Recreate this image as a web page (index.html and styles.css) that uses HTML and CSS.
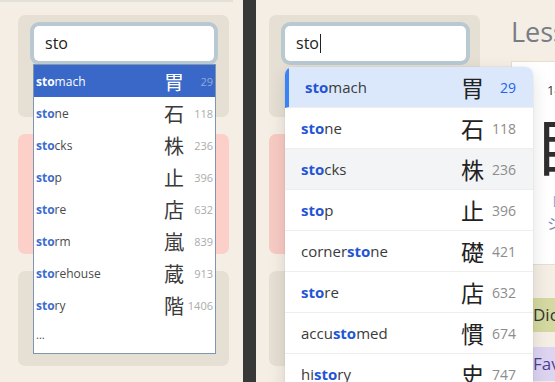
FILE: index.html
```html
<!DOCTYPE html>
<html lang="en">
<head>
  <meta charset="UTF-8">
  <meta name="viewport" content="width=device-width, initial-scale=1.0">
  <title>Search suggestions</title>
  <link rel="stylesheet" href="styles.css">
</head>
<body>

  <!-- old dropdown -->
  <section class="pane pane-old">
      <div class="topline"></div>
      <aside class="side">
          <div class="card card-search">
              <div class="search">
                  sto
                  <ul class="suggest suggest-old">
                      <li class="is-active"><span class="word"><b class="hit">sto</b>mach</span><span class="kanji">胃</span><span class="num">29</span></li>
                      <li><span class="word"><b class="hit">sto</b>ne</span><span class="kanji">石</span><span class="num">118</span></li>
                      <li><span class="word"><b class="hit">sto</b>cks</span><span class="kanji">株</span><span class="num">236</span></li>
                      <li><span class="word"><b class="hit">sto</b>p</span><span class="kanji">止</span><span class="num">396</span></li>
                      <li><span class="word"><b class="hit">sto</b>re</span><span class="kanji">店</span><span class="num">632</span></li>
                      <li><span class="word"><b class="hit">sto</b>rm</span><span class="kanji">嵐</span><span class="num">839</span></li>
                      <li><span class="word"><b class="hit">sto</b>rehouse</span><span class="kanji">蔵</span><span class="num">913</span></li>
                      <li><span class="word"><b class="hit">sto</b>ry</span><span class="kanji">階</span><span class="num">1406</span></li>
                      <li class="more">...</li>
                  </ul>
              </div>
          </div>
          <div class="card card-alert"></div>
          <div class="card card-bottom"></div>
      </aside>
  </section>

  <div class="divider"></div>

  <!-- new dropdown -->
  <section class="pane pane-new">
      <aside class="side">
          <div class="card card-search">
              <div class="search search-new">
                  sto<span class="caret"></span>
                  <ul class="suggest suggest-new">
                      <li class="is-active"><span class="word"><b class="hit">sto</b>mach</span><span class="kanji">胃</span><span class="num">29</span></li>
                      <li><span class="word"><b class="hit">sto</b>ne</span><span class="kanji">石</span><span class="num">118</span></li>
                      <li class="is-hover"><span class="word"><b class="hit">sto</b>cks</span><span class="kanji">株</span><span class="num">236</span></li>
                      <li><span class="word"><b class="hit">sto</b>p</span><span class="kanji">止</span><span class="num">396</span></li>
                      <li><span class="word">corner<b class="hit">sto</b>ne</span><span class="kanji">礎</span><span class="num">421</span></li>
                      <li><span class="word"><b class="hit">sto</b>re</span><span class="kanji">店</span><span class="num">632</span></li>
                      <li><span class="word">accu<b class="hit">sto</b>med</span><span class="kanji">慣</span><span class="num">674</span></li>
                      <li><span class="word">hi<b class="hit">sto</b>ry</span><span class="kanji">史</span><span class="num">747</span></li>
                  </ul>
              </div>
          </div>
          <div class="card card-alert"></div>
          <div class="card card-bottom"></div>
      </aside>

      <main class="main">
          <h1 class="title">Lesson 3</h1>
          <div class="kanji-card">
              <div class="kanji-no">14</div>
              <div class="kanji-big">自</div>
              <div class="kanji-on">[on]</div>
              <div class="kanji-kun">シ</div>
          </div>
          <div class="bar bar-dict">Dictionary</div>
          <div class="bar bar-fav">Favorites</div>
      </main>
  </section>

</body>
</html>
```

FILE: styles.css
```css
body {
  font-family: "Open Sans", "Noto Sans", sans-serif;
  background-color: #f5eee5;
  color: #444;
  margin: 0;
  height: 382px;
  display: flex;
  overflow: hidden;
}

.pane {
  display: flex;
  overflow: hidden;
  flex-shrink: 0;
}

.pane-old {
  width: 243px;
  flex-direction: column;
}

.pane-new {
  flex: 1;
  gap: 31px;
  padding-left: 13px;
}

.divider {
  width: 13px;
  flex-shrink: 0;
  background: #383838;
}

.topline {
  width: 233px;
  height: 2px;
  background: #e3dfd9;
}

.side {
  width: 211px;
  flex-shrink: 0;
  display: flex;
  flex-direction: column;
  gap: 17px;
  padding-top: 15px;
}

.pane-old .side {
  margin-left: 18px;
  padding-top: 13px;
}

.card {
  border-radius: 7px;
  background: #e6e0d4;
}

.card-search {
  height: 102px;
  padding: 11px 0 0 16px;
  box-sizing: border-box;
}

.card-alert {
  height: 120px;
  background: #fcd0c9;
}

.pane-new .card-alert {
  background: #f7cbc4;
}

.card-bottom {
  height: 95px;
}

/* search field */
.search {
  position: relative;
  width: 180px;
  height: 35px;
  padding-left: 11px;
  box-sizing: border-box;
  background: #fff;
  border-radius: 5px;
  box-shadow: 0 0 0 4px #b9c9d2;
  font-size: 16px;
  line-height: 35px;
  color: #222;
}

.search-new {
  width: 181px;
}

.caret {
  display: inline-block;
  width: 1px;
  height: 19px;
  margin-left: 1px;
  background: #222;
  vertical-align: -4px;
}

.suggest {
  position: absolute;
  left: 0;
  margin: 0;
  padding: 0;
  list-style: none;
  background: #fff;
  line-height: normal;
  z-index: 2;
}

.suggest li {
  display: flex;
  align-items: center;
  box-sizing: border-box;
}

.word {
  flex: 1;
  white-space: nowrap;
}

.kanji {
  font-family: "Noto Sans CJK JP", sans-serif;
}

.num {
  text-align: right;
  white-space: nowrap;
}

.hit {
  font-weight: 700;
}

/* old list */
.suggest-old {
  top: 38px;
  left: -1px;
  width: 183px;
  border: 1px solid #7e96b1;
  box-sizing: border-box;
}

.suggest-old li {
  height: 32px;
  padding: 0 2px;
  font-size: 12px;
  color: #4a4a4a;
}

.suggest-old .kanji {
  font-size: 20px;
  color: #3a3a3a;
}

.suggest-old .num {
  width: 29px;
  font-size: 11px;
  color: #ababab;
}

.suggest-old .hit {
  color: #3a6cd3;
}

.suggest-old .is-active {
  background: #3968c8;
  color: #fff;
}

.suggest-old .is-active .hit,
.suggest-old .is-active .kanji {
  color: #fff;
}

.suggest-old .is-active .num {
  color: #93a9d9;
}

.suggest-old .more {
  font-size: 11px;
  padding-bottom: 6px;
}

/* new list */
.suggest-new {
  top: 41px;
  width: 248px;
  border-radius: 8px;
  overflow: hidden;
  box-shadow: 0 6px 18px rgba(0, 0, 0, 0.12), 0 0 0 1px rgba(0, 0, 0, 0.03);
}

.suggest-new li {
  height: 41px;
  padding: 0 17px 0 16px;
  font-size: 15px;
  color: #3a3a3a;
  border-bottom: 1px solid #eeeeee;
}

.suggest-new .kanji {
  font-size: 23px;
  color: #222;
}

.suggest-new .num {
  width: 32px;
  font-size: 14px;
  color: #8c8c8c;
}

.suggest-new .hit {
  color: #1f55d6;
}

.suggest-new .is-active {
  background: #dbe8fc;
  border-left: 4px solid #3b82f6;
}

.suggest-new .is-active .num {
  color: #2563eb;
}

.suggest-new .is-hover {
  background: #f3f4f6;
}

/* lesson column */
.main {
  width: 320px;
  flex-shrink: 0;
  padding-top: 16px;
}

.title {
  margin: 0;
  font-size: 27px;
  font-weight: 400;
  line-height: 32px;
  color: #777c85;
  white-space: nowrap;
}

.kanji-card {
  margin-top: 13px;
  height: 204px;
  box-sizing: border-box;
  padding: 19px 0 0 35px;
  background: #fff;
  border: 1px solid #e6ded1;
}

.kanji-no {
  font-size: 13px;
  line-height: 18px;
  color: #333;
}

.kanji-big {
  margin: 6px 0 0 -14px;
  font-family: "Noto Sans CJK JP", sans-serif;
  font-size: 68px;
  line-height: 72px;
  color: #2e2e2e;
}

.kanji-on {
  margin: 16px 0 0 6px;
  font-size: 12px;
  line-height: 16px;
  color: #7da0d6;
}

.kanji-kun {
  margin-top: 4px;
  font-family: "Noto Sans CJK JP", sans-serif;
  font-size: 15px;
  line-height: 20px;
  color: #6f86ad;
}

.bar {
  height: 34px;
  padding-left: 22px;
  font-size: 17px;
  line-height: 34px;
  white-space: nowrap;
}

.bar-dict {
  margin-top: 33px;
  background: #d4d9a1;
  color: #333;
}

.bar-fav {
  margin-top: 15px;
  background: #ddd4f2;
  color: #4e3f96;
}
```
